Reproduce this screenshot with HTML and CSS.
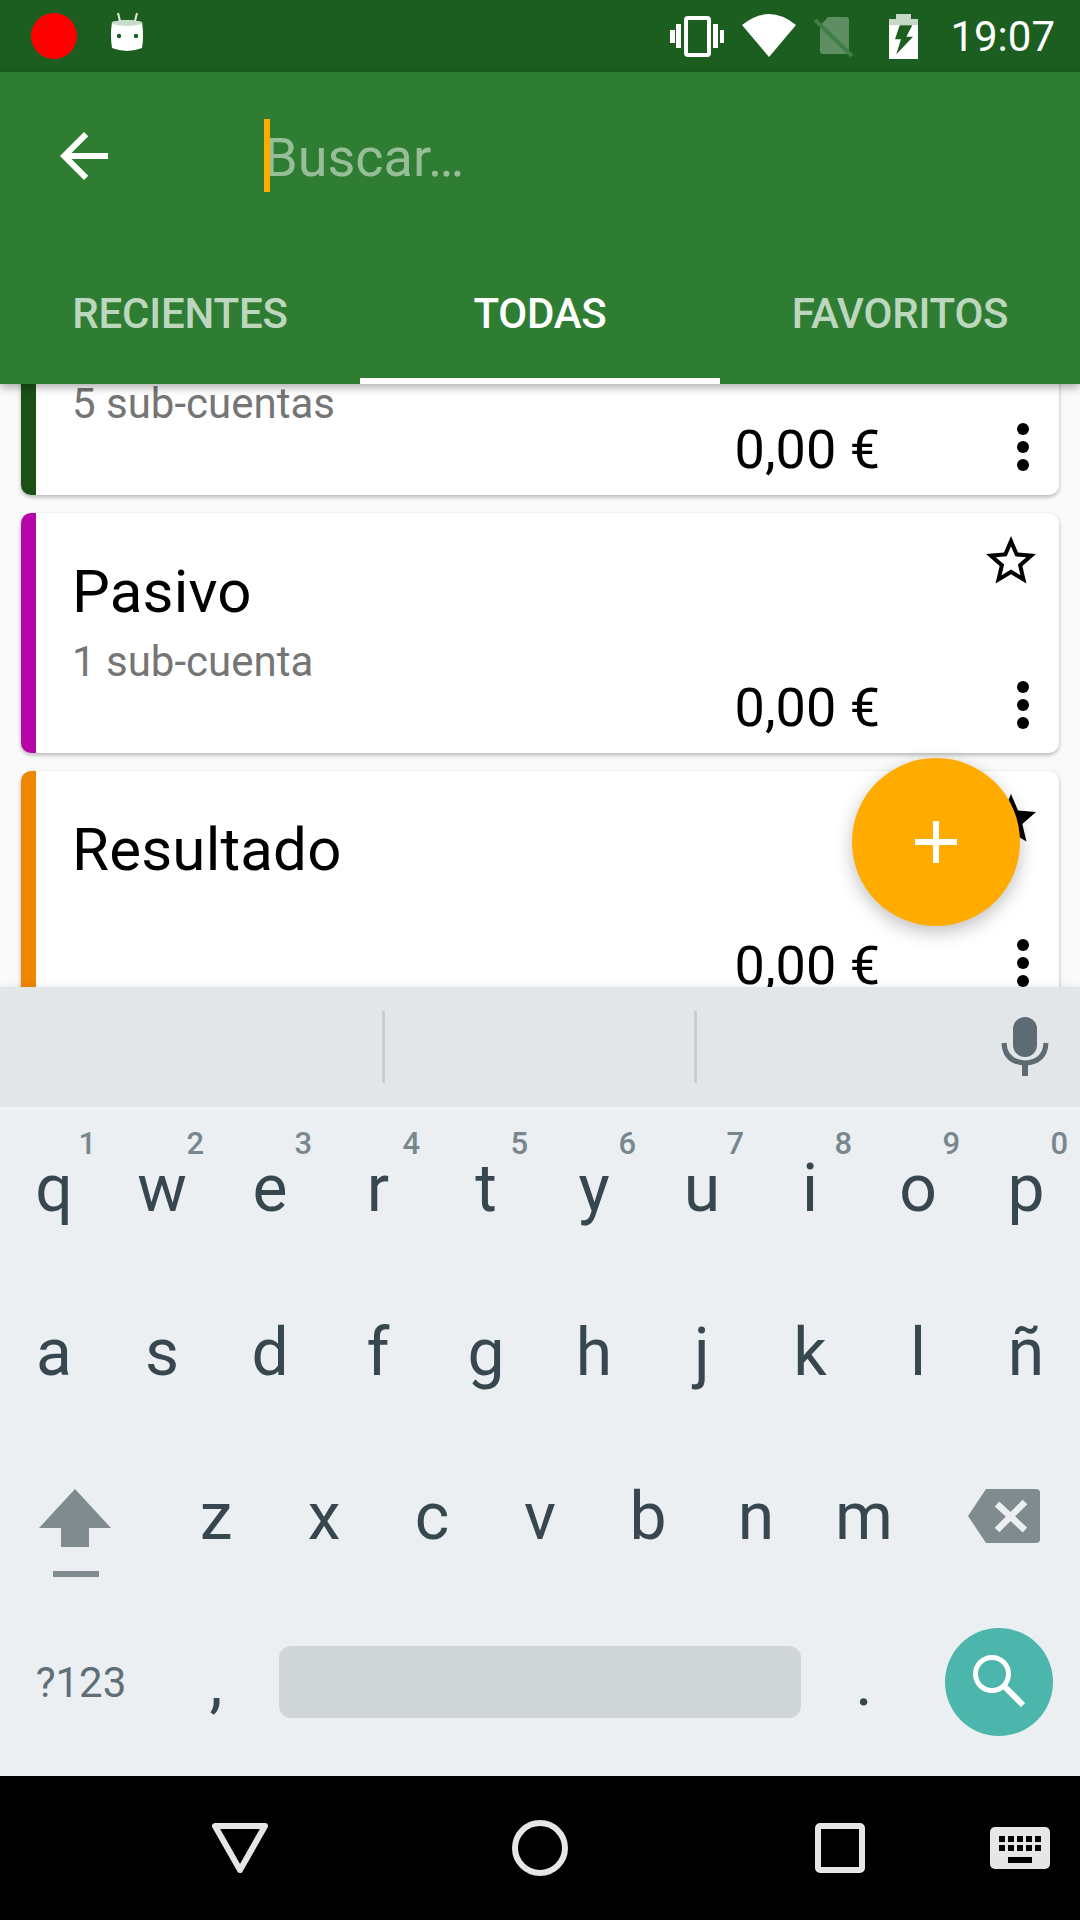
FILE: index.html
```html
<!DOCTYPE html>
<html lang="es">
<head>
    <meta charset="UTF-8">
    <meta name="viewport" content="width=device-width, initial-scale=1.0">
    <title>Buscar cuentas</title>
    <link rel="stylesheet" href="styles.css">
</head>
<body>
    <div class="screen">
        <div class="status-bar">
            <div class="rec-dot"></div>
            <svg class="st-android" width="34" height="40" viewBox="0 0 34 40">
                <path d="M8 0 L10 8 M27 0 L25 8" stroke="#e3ede4" stroke-width="2"/>
                <path d="M2 9 Q17 5 32 9 Q34 22 32 35 Q17 41 2 35 Q0 22 2 9Z" fill="#fff"/>
                <path d="M2 9 Q17 5 32 9 L32 11 Q17 15 2 11Z" fill="#c9dccb"/>
                <circle cx="9" cy="23" r="2.200" fill="#1b5e20"/>
                <circle cx="26" cy="23" r="2.200" fill="#1b5e20"/>
            </svg>
            <div class="spacer"></div>
            <svg class="st-vibrate" width="54" height="42" viewBox="0 0 54 42">
                <rect x="16" y="3" width="23" height="37" rx="2" fill="none" stroke="#fff" stroke-width="4"/>
                <path d="M0 15h5v13H0zM6 9h5v24H6zM43 9h5v24h-5zM50 15h4v13h-4z" fill="#fff"/>
            </svg>
            <svg class="st-wifi" width="54" height="44" viewBox="0 0 54 44">
                <path d="M27 43 L0 11 Q27 -11 54 11Z" fill="#fff"/>
            </svg>
            <svg class="st-sim" width="40" height="42" viewBox="0 0 40 42">
                <path d="M6 11 L14 2 H32 Q35 2 35 5 V36 Q35 39 32 39 H9 Q6 39 6 36Z" fill="#fff" fill-opacity="0.3"/>
                <path d="M1 5 L38 41" stroke="#3f7f45" stroke-width="4"/>
            </svg>
            <svg class="st-battery" width="29" height="45" viewBox="0 0 29 45">
                <path d="M7 0h15v5h7v40H0V5h7z" fill="#fff"/>
                <path d="M7 0h15v5h7v6H0V5h7z" fill="#1b5e20" fill-opacity="0.25"/>
                <path d="M10.700 11.300 H23.300 L17.300 22.700 H24 L7.300 40.300 L12 25.300 H6Z" fill="#1b5e20"/>
            </svg>
            <span class="st-time">19:07</span>
        </div>

        <div class="app-header">
            <div class="search-row">
                <svg class="back-icon" width="72" height="72" viewBox="0 0 24 24">
                    <path d="M20 11H7.830l5.590-5.590L12 4l-8 8 8 8 1.410-1.410L7.830 13H20v-2z" fill="#fff"/>
                </svg>
                <div class="search-field">
                    <span class="caret"></span>
                    <span class="placeholder">Buscar…</span>
                </div>
            </div>
            <div class="tabs">
                <div class="tab">RECIENTES</div>
                <div class="tab active">TODAS</div>
                <div class="tab">FAVORITOS</div>
            </div>
        </div>

        <div class="content">
            <div class="card-list">
                <div class="card card-green">
                    <div class="card-top">
                        <div class="card-title">&nbsp;</div>
                    </div>
                    <div class="card-sub">5 sub-cuentas</div>
                    <div class="card-bottom">
                        <span class="amount">0,00 €</span>
                        <svg class="more-icon" width="72" height="72" viewBox="0 0 24 24"><circle cx="12" cy="6" r="2"/><circle cx="12" cy="12" r="2"/><circle cx="12" cy="18" r="2"/></svg>
                    </div>
                </div>

                <div class="card card-purple">
                    <div class="card-top">
                        <div class="card-title">Pasivo</div>
                        <svg class="star-icon" width="60" height="60" viewBox="0 0 24 24"><path d="M22 9.240l-7.190-.620L12 2 9.190 8.630 2 9.240l5.460 4.730L5.820 21 12 17.270 18.180 21l-1.630-7.030L22 9.240zM12 15.400l-3.760 2.270 1-4.280-3.320-2.880 4.380-.380L12 6.100l1.710 4.040 4.380.380-3.320 2.880 1 4.280L12 15.400z"/></svg>
                    </div>
                    <div class="card-sub">1 sub-cuenta</div>
                    <div class="card-bottom">
                        <span class="amount">0,00 €</span>
                        <svg class="more-icon" width="72" height="72" viewBox="0 0 24 24"><circle cx="12" cy="6" r="2"/><circle cx="12" cy="12" r="2"/><circle cx="12" cy="18" r="2"/></svg>
                    </div>
                </div>

                <div class="card card-orange">
                    <div class="card-top">
                        <div class="card-title">Resultado</div>
                        <svg class="star-icon" width="60" height="60" viewBox="0 0 24 24"><path d="M12 17.270L18.180 21l-1.640-7.030L22 9.240l-7.190-.610L12 2 9.190 8.630 2 9.240l5.460 4.730L5.820 21z"/></svg>
                    </div>
                    <div class="card-sub">&nbsp;</div>
                    <div class="card-bottom">
                        <span class="amount">0,00 €</span>
                        <svg class="more-icon" width="72" height="72" viewBox="0 0 24 24"><circle cx="12" cy="6" r="2"/><circle cx="12" cy="12" r="2"/><circle cx="12" cy="18" r="2"/></svg>
                    </div>
                </div>
            </div>
            <div class="fab">
                <svg width="42" height="42" viewBox="0 0 42 42"><path d="M18 0h6v18h18v6H24v18h-6V24H0v-6h18z" fill="#fff"/></svg>
            </div>
        </div>

        <div class="keyboard">
            <div class="suggestions">
                <div class="suggestion"></div>
                <div class="suggestion"></div>
                <div class="suggestion mic">
                    <svg width="48" height="60" viewBox="0 0 48 60">
                        <rect x="12" y="0" width="24" height="40" rx="12" fill="#5f6b73"/>
                        <path d="M3 26 Q4 45 24 46 Q44 45 45 26" fill="none" stroke="#5f6b73" stroke-width="5"/>
                        <rect x="21" y="44" width="6" height="15" fill="#5f6b73"/>
                    </svg>
                </div>
            </div>
            <div class="key-row">
                <div class="key">q<span class="hint">1</span></div>
                <div class="key">w<span class="hint">2</span></div>
                <div class="key">e<span class="hint">3</span></div>
                <div class="key">r<span class="hint">4</span></div>
                <div class="key">t<span class="hint">5</span></div>
                <div class="key">y<span class="hint">6</span></div>
                <div class="key">u<span class="hint">7</span></div>
                <div class="key">i<span class="hint">8</span></div>
                <div class="key">o<span class="hint">9</span></div>
                <div class="key">p<span class="hint">0</span></div>
            </div>
            <div class="key-row">
                <div class="key">a</div>
                <div class="key">s</div>
                <div class="key">d</div>
                <div class="key">f</div>
                <div class="key">g</div>
                <div class="key">h</div>
                <div class="key">j</div>
                <div class="key">k</div>
                <div class="key">l</div>
                <div class="key">ñ</div>
            </div>
            <div class="key-row row-wide">
                <div class="key">
                    <svg class="shift-icon" width="72" height="90" viewBox="0 0 72 90">
                        <path d="M36 0 L72 39 H50 V58 H22 V39 H0Z" fill="#7f8b8f"/>
                        <rect x="14" y="82" width="46" height="6" fill="#7f8b8f"/>
                    </svg>
                </div>
                <div class="key">z</div>
                <div class="key">x</div>
                <div class="key">c</div>
                <div class="key">v</div>
                <div class="key">b</div>
                <div class="key">n</div>
                <div class="key">m</div>
                <div class="key">
                    <svg class="del-icon" width="72" height="54" viewBox="0 0 72 54">
                        <path d="M18 0 H68 Q72 0 72 4 V50 Q72 54 68 54 H18 L0 27Z" fill="#7f8b8f"/>
                        <path d="M29 15 L57 41 M57 13 L29 41" stroke="#ebeff2" stroke-width="6.500"/>
                    </svg>
                </div>
            </div>
            <div class="key-row row-bottom">
                <div class="key key-sym">?123</div>
                <div class="key">,</div>
                <div class="key"><div class="spacebar"></div></div>
                <div class="key">.</div>
                <div class="key">
                    <div class="search-key">
                        <svg width="108" height="108" viewBox="0 0 108 108">
                            <circle cx="47" cy="46" r="16.500" fill="none" stroke="#fff" stroke-width="5"/>
                            <path d="M59 58 L78 77" stroke="#fff" stroke-width="6"/>
                        </svg>
                    </div>
                </div>
            </div>
        </div>

        <div class="nav-bar">
            <span></span>
            <svg class="nav-back" width="56" height="50" viewBox="0 0 56 50">
                <path d="M3 3 H53 L28 47Z" fill="none" stroke="#e6e6e6" stroke-width="6" stroke-linejoin="round"/>
            </svg>
            <svg class="nav-home" width="56" height="56" viewBox="0 0 56 56">
                <circle cx="28" cy="28" r="25" fill="none" stroke="#e6e6e6" stroke-width="6"/>
            </svg>
            <svg class="nav-recent" width="50" height="50" viewBox="0 0 50 50">
                <rect x="3" y="3" width="44" height="44" rx="2" fill="none" stroke="#e6e6e6" stroke-width="6"/>
            </svg>
            <svg class="nav-kbd" width="60" height="42" viewBox="0 0 60 42">
                <rect width="60" height="42" rx="5" fill="#e6e6e6"/>
                <path d="M9 9h6v6H9zM18 9h6v6h-6zM27 9h6v6h-6zM36 9h6v6h-6zM45 9h6v6h-6zM9 18h6v6H9zM18 18h6v6h-6zM27 18h6v6h-6zM36 18h6v6h-6zM45 18h6v6h-6zM18 30h24v6H18z" fill="#000"/>
            </svg>
        </div>
    </div>
</body>
</html>
```

FILE: styles.css
```css
* {
    box-sizing: border-box;
}
body {
    margin: 0;
    font-family: Roboto, "Noto Sans", sans-serif;
    background-color: #000;
}
svg {
    display: block;
}
.screen {
    width: 1080px;
    height: 1920px;
    display: flex;
    flex-direction: column;
    overflow: hidden;
}

/* status bar */
.status-bar {
    height: 72px;
    flex-shrink: 0;
    display: flex;
    align-items: center;
    padding: 0 25px 0 31px;
    background-color: #1b5e20;
}
.rec-dot {
    width: 46px;
    height: 46px;
    border-radius: 50%;
    background-color: #f00;
}
.st-android {
    margin-left: 33px;
    margin-top: -6px;
}
.spacer {
    flex: 1;
}
.st-wifi {
    margin-left: 18px;
}
.st-sim {
    margin-left: 18px;
}
.st-battery {
    margin-left: 35px;
}
.st-time {
    margin-left: 32px;
    font-size: 42px;
    color: #fff;
}

/* header */
.app-header {
    height: 312px;
    flex-shrink: 0;
    background-color: #2e7d32;
    box-shadow: 0 3px 9px rgba(0, 0, 0, 0.35);
    position: relative;
    z-index: 2;
}
.search-row {
    height: 168px;
    display: flex;
    align-items: center;
    padding-left: 48px;
}
.search-field {
    position: relative;
    margin-left: 144px;
}
.caret {
    position: absolute;
    left: 0;
    top: -5px;
    width: 6px;
    height: 73px;
    background-color: #ffab00;
}
.placeholder {
    display: block;
    font-size: 54px;
    line-height: 60px;
    padding-top: 4px;
    color: rgba(255, 255, 255, 0.5);
}
.tabs {
    height: 144px;
    display: flex;
}
.tab {
    flex: 1;
    display: flex;
    align-items: center;
    justify-content: center;
    font-size: 42px;
    font-weight: 500;
    letter-spacing: -0.2px;
    color: rgba(255, 255, 255, 0.7);
    border-bottom: 6px solid transparent;
    padding-top: 8px;
}
.tab.active {
    color: #fff;
    border-bottom-color: #fff;
}

/* cards */
.content {
    flex: 1;
    position: relative;
    overflow: hidden;
    background-color: #fafafa;
}
.card-list {
    display: flex;
    flex-direction: column;
    gap: 18px;
    padding: 0 21px;
    margin-top: -129px;
}
.card {
    height: 240px;
    flex-shrink: 0;
    display: flex;
    flex-direction: column;
    padding-left: 36px;
    background-color: #fff;
    border-left: 15px solid #000;
    border-radius: 10px;
    box-shadow: 0 2px 4px rgba(0, 0, 0, 0.28);
}
.card-green {
    border-left-color: #1b5116;
}
.card-purple {
    border-left-color: #b706a8;
}
.card-orange {
    border-left-color: #ee8600;
}
.card-top {
    height: 112px;
    display: flex;
    justify-content: space-between;
    align-items: flex-start;
    padding-top: 44px;
}
.card-title {
    font-size: 60px;
    line-height: 70px;
    letter-spacing: 0.2px;
    color: #000;
}
.star-icon {
    margin: -26px 18px 0 0;
}
.card-sub {
    font-size: 42px;
    line-height: 50px;
    color: #757575;
    margin-top: 12px;
    margin-bottom: -18px;
}
.card-bottom {
    margin-top: auto;
    margin-bottom: 12px;
    display: flex;
    justify-content: flex-end;
    align-items: center;
}
.amount {
    font-size: 54px;
    line-height: 60px;
    color: #000;
    margin-right: 107px;
    padding-top: 6px;
}
.fab {
    position: absolute;
    left: 852px;
    top: 374px;
    width: 168px;
    height: 168px;
    border-radius: 50%;
    display: flex;
    align-items: center;
    justify-content: center;
    background-color: #ffab00;
    box-shadow: 0 6px 18px rgba(0, 0, 0, 0.25);
}

/* keyboard */
.keyboard {
    height: 789px;
    flex-shrink: 0;
    position: relative;
    z-index: 1;
    background-color: #ebeff2;
    box-shadow: 0 -2px 6px rgba(0, 0, 0, 0.06);
}
.suggestions {
    height: 123px;
    display: grid;
    grid-template-columns: 385px 312px 1fr;
    align-items: center;
    background-color: #e2e6e9;
    border-bottom: 3px solid #f0f3f5;
}
.suggestion {
    height: 72px;
    border-right: 3px solid #c8cdd0;
}
.suggestion.mic {
    border-right: none;
    display: flex;
    align-items: center;
    justify-content: flex-end;
    padding-right: 31px;
}
.key-row {
    height: 164px;
    display: grid;
    grid-template-columns: repeat(10, 108px);
    padding-bottom: 8px;
}
.row-wide {
    grid-template-columns: 162px repeat(7, 108px) 162px;
}
.row-bottom {
    grid-template-columns: 162px 108px 540px 108px 162px;
    padding-bottom: 4px;
}
.key {
    position: relative;
    display: flex;
    align-items: center;
    justify-content: center;
    font-size: 66px;
    color: #37474f;
}
.hint {
    position: absolute;
    top: 15px;
    right: 12px;
    font-size: 31px;
    font-weight: 500;
    color: #78878e;
}
.key-sym {
    font-size: 42px;
    color: #5f6f78;
}
.shift-icon {
    margin: 36px 12px 0 0;
}
.del-icon {
    margin-left: 10px;
}
.spacebar {
    width: 522px;
    height: 72px;
    border-radius: 12px;
    background-color: #d0d5d8;
}
.search-key {
    width: 108px;
    height: 108px;
    border-radius: 50%;
    background-color: #4db6ac;
}

/* navigation bar */
.nav-bar {
    height: 144px;
    flex-shrink: 0;
    display: grid;
    grid-template-columns: 90px 300px 300px 300px 90px;
    align-items: center;
    justify-items: center;
    background-color: #000;
}
.nav-kbd {
    justify-self: start;
}
```
